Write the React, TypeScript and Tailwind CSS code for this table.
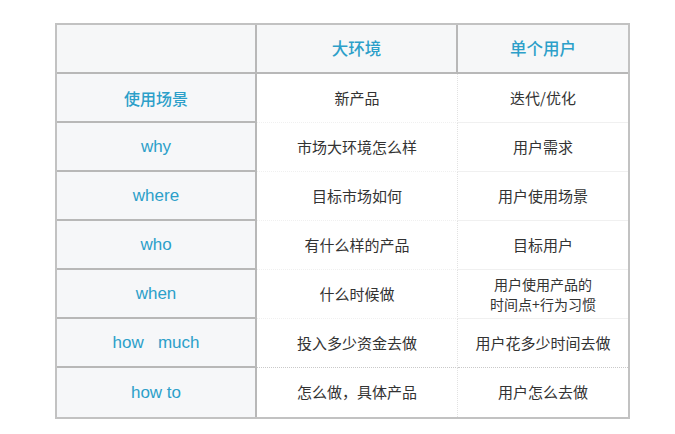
const rows: { label: string; env: string; user: React.ReactNode }[] = [
  { label: '使用场景', env: '新产品', user: '迭代/优化' },
  { label: 'why', env: '市场大环境怎么样', user: '用户需求' },
  { label: 'where', env: '目标市场如何', user: '用户使用场景' },
  { label: 'who', env: '有什么样的产品', user: '目标用户' },
  {
    label: 'when',
    env: '什么时候做',
    user: (
      <span className="text-[14px] leading-[20px]">
        用户使用产品的
        <br />
        时间点+行为习惯
      </span>
    ),
  },
  { label: 'how\u00a0\u00a0\u00a0much', env: '投入多少资金去做', user: '用户花多少时间去做' },
  { label: 'how to', env: '怎么做，具体产品', user: '用户怎么去做' },
];

export default function App() {
  return (
    <div className="w-[675px] h-[434px] bg-white pt-[23px] pl-[55px] font-['Noto_Sans_CJK_SC','Noto_Sans',sans-serif]">
      <div className="w-[575px] border-2 border-[#c2c2c2] bg-white">
        <div className="grid grid-cols-[200px_201px_170px] h-[49px] bg-[#f6f7f8] border-b-2 border-[#b8b8b8]">
          <div className="border-r-2 border-[#b8b8b8]" />
          <div className="flex items-center justify-center border-r-2 border-[#b8b8b8] text-[16.5px] font-medium text-[#2c9fc9]">
            大环境
          </div>
          <div className="flex items-center justify-center text-[16.5px] font-medium text-[#2c9fc9]">单个用户</div>
        </div>
        {rows.map((r, i) => {
          const last = i === rows.length - 1;
          const beforeLast = i === rows.length - 2;
          const cjk = i === 0;
          return (
            <div key={i} className="grid grid-cols-[200px_201px_170px] h-[49px]">
              <div
                className={`flex items-center justify-center bg-[#f6f7f9] border-r-2 border-[#b8b8b8] text-[#2c9fc9] ${cjk ? 'text-[16px] font-medium' : "text-[17px] font-['Liberation_Sans',sans-serif]"} ${last ? '' : 'border-b-2'}`}
              >
                {r.label}
              </div>
              <div
                className={`flex items-center justify-center border-r border-dotted border-r-[#e2e2e2] text-[15px] text-[#333] ${last ? '' : beforeLast ? 'border-b border-b-[#c9c9c9]' : 'border-b border-b-[#f0f0f0]'}`}
              >
                {r.env}
              </div>
              <div
                className={`flex items-center justify-center text-center text-[15px] text-[#333] ${last ? '' : beforeLast ? 'border-b border-dotted border-b-[#c9c9c9]' : 'border-b border-b-[#f0f0f0]'}`}
              >
                {r.user}
              </div>
            </div>
          );
        })}
      </div>
    </div>
  );
}
